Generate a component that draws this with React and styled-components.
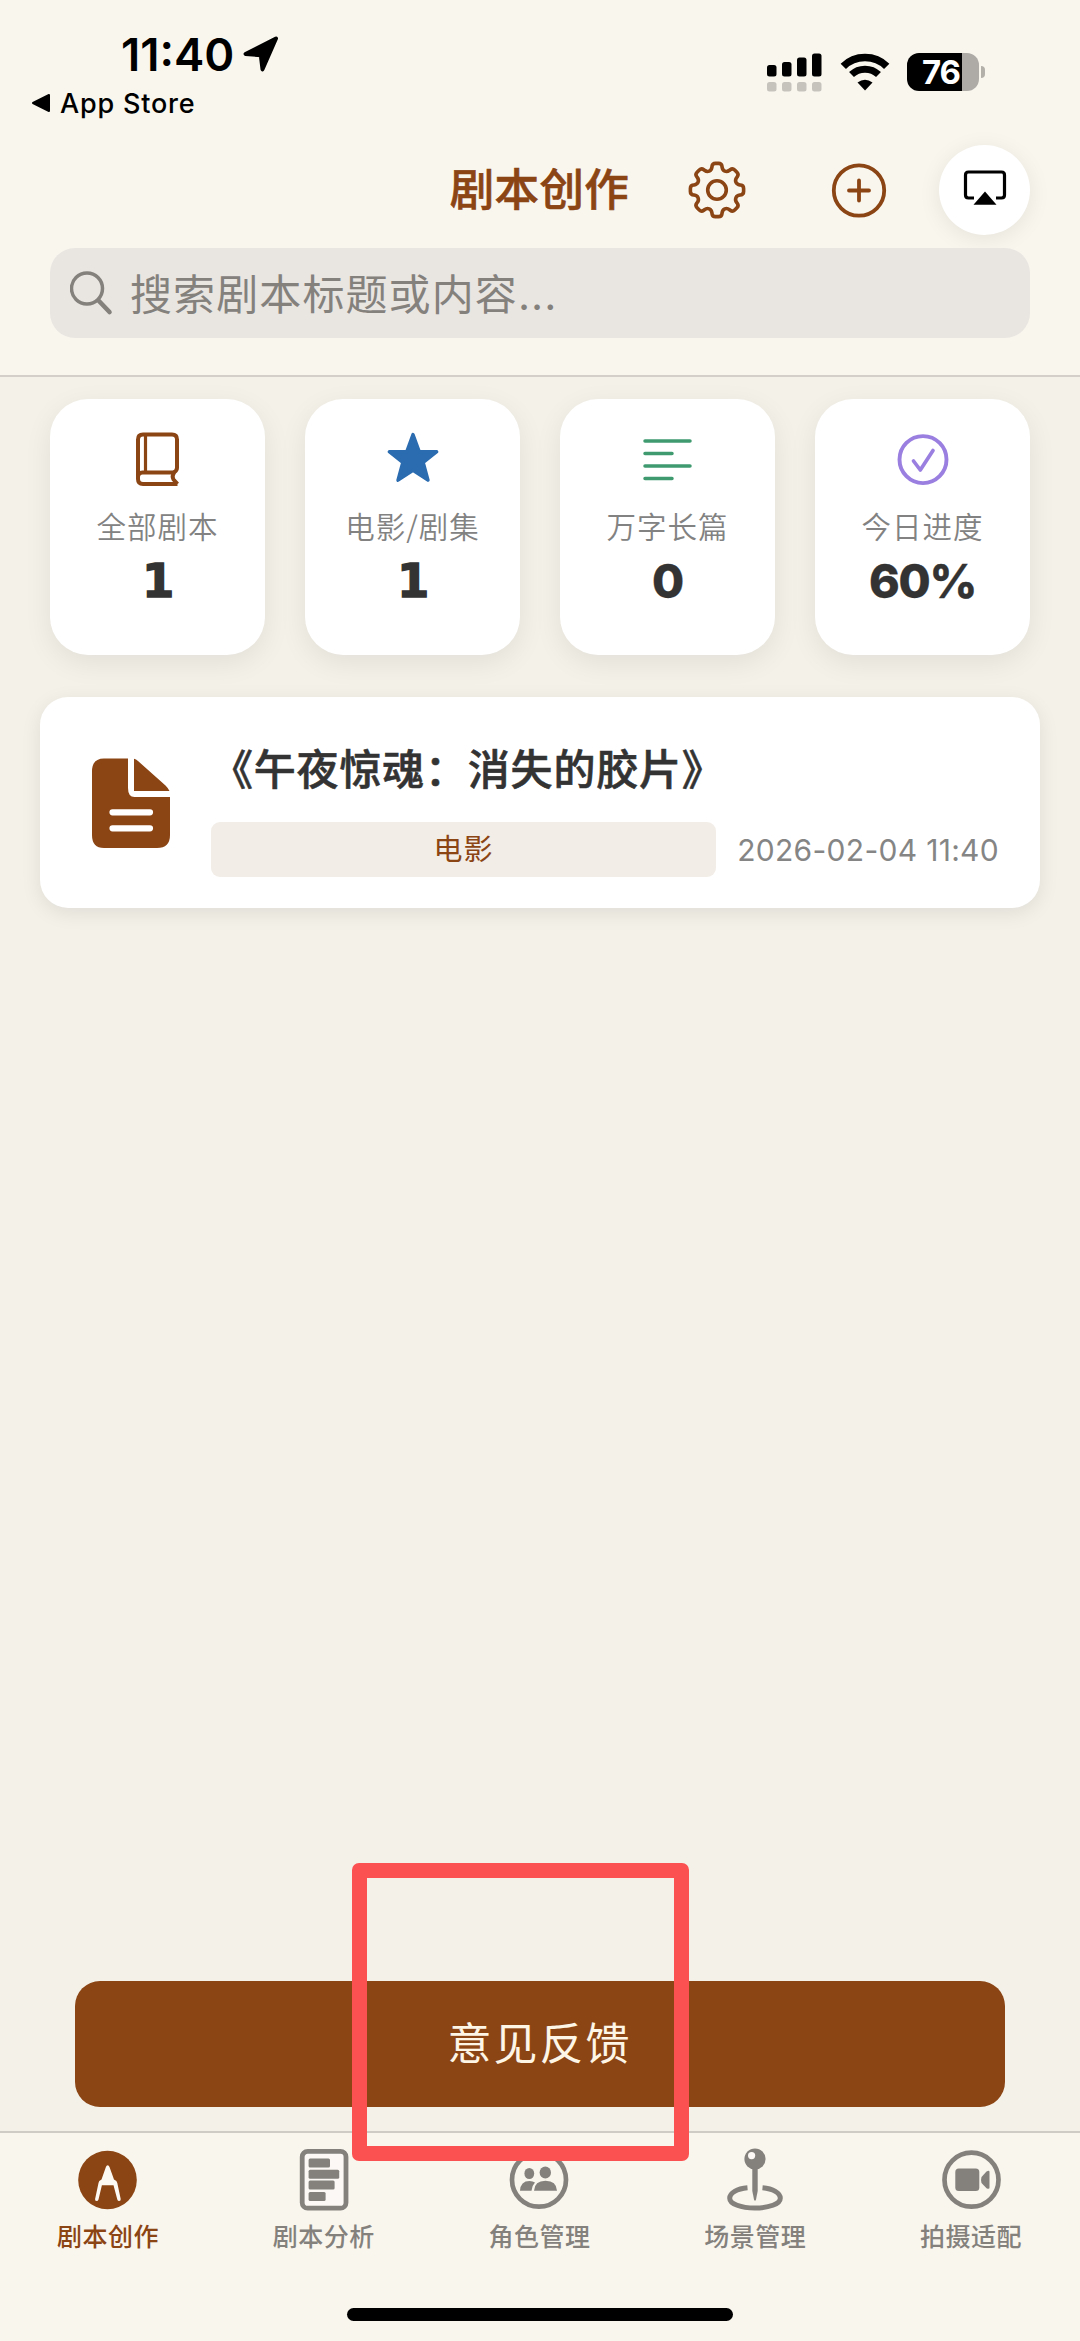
import React, { useState } from 'react';
import styled, { createGlobalStyle } from 'styled-components';

const BROWN = '#8b4413';
const GRAY = '#84817d';

const stats = [
	{ icon: 'book', label: '全部剧本', value: '1' },
	{ icon: 'star', label: '电影/剧集', value: '1' },
	{ icon: 'lines', label: '万字长篇', value: '0' },
	{ icon: 'check', label: '今日进度', value: '60%' },
];

const tabs = [
	{ icon: 'pencil', label: '剧本创作' },
	{ icon: 'report', label: '剧本分析' },
	{ icon: 'people', label: '角色管理' },
	{ icon: 'pin', label: '场景管理' },
	{ icon: 'camera', label: '拍摄适配' },
];

function gearPath() {
	const pts = [];
	for (let i = 0; i < 8; i++) {
		const mid = (i * Math.PI) / 4 - Math.PI / 2;
		[
			[-0.27, 20.6],
			[-0.17, 27],
			[0.17, 27],
			[0.27, 20.6],
		].forEach(([a, r]) => {
			pts.push([30 + r * Math.cos(mid + a), 30 + r * Math.sin(mid + a)]);
		});
	}
	// soften every corner with a quadratic curve
	const n = pts.length;
	let d = '';
	pts.forEach((p, i) => {
		const prev = pts[(i + n - 1) % n];
		const next = pts[(i + 1) % n];
		const cut = (q) => {
			const len = Math.hypot(q[0] - p[0], q[1] - p[1]);
			const k = Math.min(3, len / 2) / len;
			return [p[0] + (q[0] - p[0]) * k, p[1] + (q[1] - p[1]) * k];
		};
		const a = cut(prev);
		const b = cut(next);
		d += `${i ? 'L' : 'M'}${a[0].toFixed(2)} ${a[1].toFixed(2)}Q${p[0].toFixed(2)} ${p[1].toFixed(2)} ${b[0].toFixed(2)} ${b[1].toFixed(2)}`;
	});
	return d + 'Z';
}

const statIcons = {
	book: (
		<svg width="60" height="60" viewBox="0 0 60 60" fill="none" stroke={BROWN} strokeWidth="4">
			<path d="M49.500 55H15Q10 55 10 50V10.500Q10 5.500 15 5.500H44Q49 5.500 49 10.500V38.500Q49 41.500 46.500 43Q43.500 47 45.500 50.500L49.500 55" strokeLinejoin="round" />
			<path d="M10 48Q10 43.500 14.500 43.500H47" />
			<path d="M17.500 6V43" strokeWidth="3.200" />
		</svg>
	),
	star: (
		<svg width="60" height="60" viewBox="0 0 60 60">
			<path d="M30 5.500L36.200 22.700H53.700L40.200 33.500L45 51.200L30 41.300L15 51.200L19.800 33.500L6.300 22.700H23.800Z" fill="#2b6cb0" stroke="#2b6cb0" strokeWidth="3.400" strokeLinejoin="round" />
		</svg>
	),
	lines: (
		<svg width="60" height="60" viewBox="0 0 60 60" stroke="#3f9a70" strokeWidth="3.500" strokeLinecap="round">
			<path d="M7 12H52M7 24.500H34M7 37H52M7 49.500H34" />
		</svg>
	),
	check: (
		<svg width="60" height="60" viewBox="0 0 60 60" fill="none" stroke="#9a7fe0" strokeLinecap="round" strokeLinejoin="round">
			<circle cx="30" cy="30.600" r="23.500" strokeWidth="3.900" />
			<path d="M20.500 32L27.300 41L40 21.500" strokeWidth="3.700" />
		</svg>
	),
};

const tabIcons = {
	pencil: (
		<svg width="64" height="64" viewBox="0 0 64 64">
			<ellipse cx="31.500" cy="32" rx="29.300" ry="29.300" fill={BROWN} />
			<path d="M31.700 17.300Q32.900 17.300 33.500 19L38 31.500Q41.100 32.800 41.300 35L44.700 51Q44.900 53 43.200 53Q41.700 53 41.300 51.400L37.500 37.300H25.900L22.500 51.400Q22.100 53 20.500 53Q18.700 53 19.100 51L22.500 35Q22.500 32.800 25.500 31.500L29.900 19Q30.500 17.300 31.700 17.300Z" fill="#fdf9f3" />
		</svg>
	),
	report: (
		<svg width="64" height="64" viewBox="0 0 64 64">
			<rect x="10.200" y="3.400" width="43.800" height="56.800" rx="5.500" fill="#fbf8f5" stroke={GRAY} strokeWidth="4.800" />
			<g fill={GRAY}>
				<rect x="16.600" y="10.500" width="21.400" height="9" rx="1.500" />
				<rect x="16.600" y="21.800" width="30.600" height="9" rx="1.500" />
				<rect x="16.600" y="32.600" width="26" height="9" rx="1.500" />
				<rect x="16.600" y="44" width="17" height="9" rx="1.500" />
			</g>
		</svg>
	),
	people: (
		<svg width="64" height="64" viewBox="0 0 64 64" fill={GRAY}>
			<circle cx="32" cy="31.700" r="27" fill="none" stroke={GRAY} strokeWidth="4.700" />
			<ellipse cx="22.300" cy="25.500" rx="4.900" ry="5.500" />
			<ellipse cx="38.300" cy="24.400" rx="5.700" ry="6" />
			<path d="M13 42.800Q13.500 33 22.500 33Q26 33 28 34.500Q25 37.500 24.500 42.800Z" />
			<path d="M27 42.800Q27.500 32.700 38.500 32.700Q49.500 32.700 50 42.800Z" />
		</svg>
	),
	pin: (
		<svg width="64" height="64" viewBox="0 0 64 64" fill={GRAY}>
			<circle cx="32" cy="11" r="10.600" />
			<circle cx="28.600" cy="7.600" r="3.600" fill="#fbf8f5" />
			<path d="M29.300 20H34.700V43L33 51.500Q32 54 31 51.500L29.300 43Z" />
			<path d="M24.500 39.800C14 40.700 6.700 45 6.700 50.200C6.700 56 18 60 32 60C46 60 57.300 56 57.300 50.200C57.300 45 50 40.700 39.500 39.800" fill="none" stroke={GRAY} strokeWidth="5" />
		</svg>
	),
	camera: (
		<svg width="64" height="64" viewBox="0 0 64 64" fill={GRAY}>
			<circle cx="32.500" cy="31.700" r="27" fill="none" stroke={GRAY} strokeWidth="4.700" />
			<rect x="16.300" y="20.500" width="24" height="22.500" rx="3.500" />
			<path d="M42.500 29L47.500 23.500Q50.500 21.800 50.500 24V39.500Q50.500 41.800 47.500 40.200L42.500 35Q41.500 32 42.500 29Z" />
		</svg>
	),
};

function App() {
	const [active, setActive] = useState(0);

	return (
		<>
			<GlobalStyle />
			<Screen>
				<StatusBar>
					<StatusLeft>
						<Clock>
							<Time>11:40</Time>
							<svg width="38" height="38" viewBox="0 0 38 38">
								<path d="M34 3.500L20.500 34.300L18.800 20.200L3.500 19Z" fill="#000" stroke="#000" strokeWidth="4" strokeLinejoin="round" />
							</svg>
						</Clock>
						<BackLink>
							<svg width="20" height="20" viewBox="0 0 20 20">
								<path d="M18 2V18L2 10Z" stroke="#000" strokeWidth="2" strokeLinejoin="round" />
							</svg>
							App Store
						</BackLink>
					</StatusLeft>
					<StatusRight>
						<svg width="56" height="40" viewBox="0 0 56 40">
							<rect x="0" y="12" width="9.500" height="11.500" rx="2.500" />
							<rect x="15" y="9" width="9.500" height="14.500" rx="2.500" />
							<rect x="30" y="4.500" width="9.500" height="19" rx="2.500" />
							<rect x="45" y="0.500" width="9.500" height="23" rx="2.500" />
							<g fill="#c6c3bc">
								<rect x="0" y="29" width="9.500" height="9.500" rx="2.500" />
								<rect x="15" y="29" width="9.500" height="9.500" rx="2.500" />
								<rect x="30" y="29" width="9.500" height="9.500" rx="2.500" />
								<rect x="45" y="29" width="9.500" height="9.500" rx="2.500" />
							</g>
						</svg>
						<svg width="50" height="40" viewBox="0 0 50 40">
							<path d="M3.300 13.300C15 1.500 35 1.500 46.700 13.300" fill="none" stroke="#000" strokeWidth="7.500" />
							<path d="M11.500 21.600C19 14.300 31 14.300 38.500 21.600" fill="none" stroke="#000" strokeWidth="7" />
							<path d="M25 37.500L17.500 29.500Q25 24 32.500 29.500Z" />
						</svg>
						<Battery>
							<BatteryBody>76</BatteryBody>
							<BatteryTip />
						</Battery>
					</StatusRight>
				</StatusBar>

				<NavBar>
					<Title>剧本创作</Title>
					<IconButton $right={82}>
						<svg width="60" height="60" viewBox="0 0 60 60" fill="none" stroke={BROWN} strokeWidth="3.600">
							<path d={gearPath()} />
							<circle cx="30" cy="30" r="9.300" />
						</svg>
					</IconButton>
					<IconButton $right={50}>
						<svg width="60" height="60" viewBox="0 0 60 60" fill="none" stroke={BROWN} strokeWidth="3.800" strokeLinecap="round">
							<circle cx="30" cy="30.500" r="25.200" />
							<path d="M30 20.500V40.500M20 30.500H40" />
						</svg>
					</IconButton>
					<AirPlay>
						<svg width="46" height="40" viewBox="0 0 46 40">
							<path d="M12 30H6.500Q3.500 30 3.500 27V7Q3.500 4 6.500 4H39.500Q42.500 4 42.500 7V27Q42.500 30 39.500 30H34" fill="none" stroke="#000" strokeWidth="3.200" />
							<path d="M23 23.500L34.500 36.800H11.500Z" />
						</svg>
					</AirPlay>
				</NavBar>

				<SearchBox>
					<svg width="44" height="46" viewBox="0 0 44 46" fill="none" stroke={GRAY}>
						<circle cx="17" cy="18.500" r="15.500" strokeWidth="3.500" />
						<path d="M28.500 30.500L39.500 42" strokeWidth="4.600" strokeLinecap="round" />
					</svg>
					<Placeholder>搜索剧本标题或内容...</Placeholder>
				</SearchBox>

				<Content>
					<StatRow>
						{stats.map((s) => (
							<StatCard key={s.label}>
								{statIcons[s.icon]}
								<StatLabel>{s.label}</StatLabel>
								<StatValue $slab={s.value === '1'}>{s.value}</StatValue>
							</StatCard>
						))}
					</StatRow>

					<ScriptCard>
						<svg width="80" height="92" viewBox="0 0 80 92">
							<path d="M13 1.500H37V31Q37 40 43.500 40H79V78Q79 91 66 91H13Q1 91 1 78V14.500Q1 1.500 13 1.500Z" fill={BROWN} />
							<path d="M43 1.800Q45 2.200 47 4L74.500 28.500Q77.500 31.500 78.500 34H43Z" fill={BROWN} />
							<path d="M21.500 55.300H59M21.500 71.300H59" stroke="#fff" strokeWidth="6.200" strokeLinecap="round" />
						</svg>
						<ScriptInfo>
							<ScriptTitle>《午夜惊魂：消失的胶片》</ScriptTitle>
							<Meta>
								<Tag>电影</Tag>
								<DateText>2026-02-04 11:40</DateText>
							</Meta>
						</ScriptInfo>
					</ScriptCard>

					<Feedback>意见反馈</Feedback>
				</Content>

				<TabBar>
					{tabs.map((t, i) => (
						<Tab key={t.label} $active={i === active} onClick={() => setActive(i)}>
							{tabIcons[t.icon]}
							<span>{t.label}</span>
						</Tab>
					))}
				</TabBar>
				<HomeArea>
					<HomeBar />
				</HomeArea>
				<Highlight />
			</Screen>
		</>
	);
}

const GlobalStyle = createGlobalStyle`
	body {
		margin: 0;
	}
	* {
		box-sizing: border-box;
	}
	svg {
		display: block;
		flex-shrink: 0;
	}
`;

const Screen = styled.div`
	position: relative;
	display: flex;
	flex-direction: column;
	width: 1080px;
	height: 2341px;
	overflow: hidden;
	background: #f9f6ee;
	font-family: Inter, 'Noto Sans CJK SC', sans-serif;
`;

const StatusBar = styled.div`
	display: flex;
	justify-content: space-between;
	height: 145px;
	padding: 27px 95px 0 31px;
`;

const StatusLeft = styled.div`
	display: flex;
	flex-direction: column;
`;

const Clock = styled.div`
	display: flex;
	align-items: center;
	gap: 8px;
	height: 54px;
	padding-left: 90px;
`;

const Time = styled.span`
	font-size: 45.5px;
	font-weight: 600;
	letter-spacing: 0;
`;

const BackLink = styled.div`
	display: flex;
	align-items: center;
	gap: 9px;
	height: 44px;
	font-size: 27px;
	font-weight: 500;
	letter-spacing: 0.8px;
`;

const StatusRight = styled.div`
	display: flex;
	align-items: flex-start;
	gap: 17px;
	padding-top: 26px;
`;

const Battery = styled.div`
	display: flex;
	align-items: center;
	gap: 2px;
`;

const BatteryBody = styled.div`
	display: flex;
	align-items: center;
	justify-content: center;
	width: 72px;
	height: 38px;
	padding-right: 4px;
	border-radius: 12px;
	background: linear-gradient(to right, #000 55px, #aeaba7 55px);
	color: #fff;
	font-size: 33px;
	font-weight: 700;
	letter-spacing: -1px;
`;

const BatteryTip = styled.div`
	width: 4px;
	height: 12px;
	border-radius: 0 5px 5px 0;
	background: #b3b0aa;
`;

const NavBar = styled.div`
	display: flex;
	align-items: center;
	justify-content: flex-end;
	height: 90px;
	padding-right: 50px;
`;

const Title = styled.h1`
	margin: 0 58px 0 0;
	color: ${BROWN};
	font-size: 44.5px;
	font-weight: 500;
	letter-spacing: 0.3px;
	line-height: 90px;
	-webkit-text-stroke: 0.6px ${BROWN};
`;

const IconButton = styled.div`
	margin-right: ${({ $right }) => $right}px;
`;

const AirPlay = styled.div`
	display: flex;
	align-items: center;
	justify-content: center;
	width: 91px;
	height: 90px;
	padding-bottom: 4px;
	border-radius: 50%;
	background: #fff;
	box-shadow: 0 4px 22px rgba(0, 0, 0, 0.08);
`;

const SearchBox = styled.div`
	display: flex;
	align-items: center;
	gap: 16px;
	height: 90px;
	margin: 13px 50px 37px;
	padding-left: 20px;
	border-radius: 25px;
	background: #e9e5e1;
`;

const Placeholder = styled.span`
	padding-bottom: 4px;
	color: ${GRAY};
	font-size: 42px;
	letter-spacing: 1.1px;
`;

const Content = styled.main`
	display: flex;
	flex-direction: column;
	height: 1756px;
	padding: 22px 0 24px;
	border-top: 2px solid #d4d0c9;
	background: #f4f1e9;
`;

const StatRow = styled.div`
	display: grid;
	grid-template-columns: repeat(4, 215px);
	gap: 40px;
	padding: 0 50px;
`;

const StatCard = styled.div`
	display: flex;
	flex-direction: column;
	align-items: center;
	height: 256px;
	padding-top: 30px;
	border-radius: 38px;
	background: #fff;
	box-shadow: 0 8px 28px rgba(0, 0, 0, 0.075);
`;

const StatLabel = styled.div`
	height: 42px;
	margin-top: 15px;
	color: #828282;
	font-family: 'Noto Sans CJK SC', sans-serif;
	font-size: 29.5px;
	font-weight: 350;
	letter-spacing: 1px;
	line-height: 42px;
	white-space: nowrap;
`;

const StatValue = styled.div`
	margin-top: 5px;
	color: #333;
	font-family: ${({ $slab }) => ($slab ? "'DejaVu Sans'" : 'Inter')}, sans-serif;
	font-size: 46.5px;
	font-weight: 800;
	letter-spacing: -1.2px;
	line-height: 60px;
	-webkit-text-stroke: ${({ $slab }) => ($slab ? '1.4px' : '0.3px')} #333;
`;

const ScriptCard = styled.div`
	display: flex;
	align-items: center;
	height: 211px;
	margin: 42px 40px 0;
	padding: 0 41px 0 51px;
	border-radius: 28px;
	background: #fff;
	box-shadow: 0 5px 20px rgba(0, 0, 0, 0.085);
`;

const ScriptInfo = styled.div`
	flex: 1;
	margin-left: 40px;
`;

const ScriptTitle = styled.div`
	height: 60px;
	margin-top: 12px;
	color: #333;
	font-size: 42px;
	font-weight: 500;
	letter-spacing: 0.8px;
	line-height: 60px;
	-webkit-text-stroke: 0.6px #333;
`;

const Meta = styled.div`
	display: flex;
	align-items: center;
	gap: 21px;
	margin-top: 22px;
`;

const Tag = styled.div`
	flex: 1;
	height: 55px;
	border-radius: 9px;
	background: #f2ede7;
	color: ${BROWN};
	font-size: 29px;
	letter-spacing: 1px;
	line-height: 56px;
	text-align: center;
`;

const DateText = styled.span`
	color: #858585;
	font-size: 30px;
	letter-spacing: 0.3px;
	white-space: nowrap;
`;

const Feedback = styled.div`
	height: 126px;
	margin: auto 75px 0;
	padding: 1px 1px 0 0;
	border-radius: 25px;
	background: ${BROWN};
	color: #fdf5e6;
	font-size: 44px;
	letter-spacing: 2px;
	line-height: 125px;
	text-align: center;
`;

const TabBar = styled.nav`
	display: grid;
	grid-template-columns: repeat(5, 1fr);
	height: 146px;
	padding: 15px 1px 0 0;
	border-top: 2px solid #cfccc6;
`;

const Tab = styled.div`
	display: flex;
	flex-direction: column;
	align-items: center;
	gap: 5px;
	color: ${({ $active }) => ($active ? BROWN : GRAY)};
	font-size: 25px;
	font-weight: 500;
	letter-spacing: 0.5px;
	line-height: 40px;
`;

const HomeArea = styled.div`
	display: flex;
	justify-content: center;
	flex: 1;
	padding-top: 31px;
`;

const HomeBar = styled.div`
	width: 386px;
	height: 13px;
	border-radius: 7px;
	background: #000;
`;

const Highlight = styled.div`
	position: absolute;
	left: 352px;
	top: 1863px;
	width: 337px;
	height: 298px;
	border: 15px solid #fc5151;
	border-radius: 7px;
`;

export default App;
